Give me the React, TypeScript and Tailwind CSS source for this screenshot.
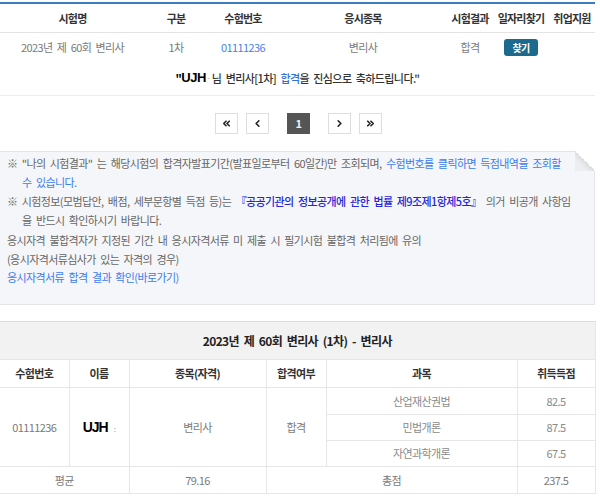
import { ChevronLeft, ChevronRight, ChevronsLeft, ChevronsRight } from 'lucide-react';

const ko = "font-['Noto_Sans_CJK_KR','Noto_Sans',sans-serif]";

function PageButton({ children, active }: { children: React.ReactNode; active?: boolean }) {
  return (
    <div
      className={`flex h-[21px] w-[23px] items-center justify-center border text-[11px] font-bold ${
        active ? 'w-[21px] border-[#555] bg-[#555] text-[#e8f4ff]' : 'border-[#dedede] bg-white text-[#222]'
      }`}
    >
      {children}
    </div>
  );
}

function SubjectRow({ name, score }: { name: string; score: string }) {
  return (
    <>
      <td className="border-b border-l border-[#e6e6e6] text-center text-[#8a8a8a]">{name}</td>
      <td className="border-b border-l border-r border-[#e6e6e6] text-center text-[#8a8a8a]">{score}</td>
    </>
  );
}

export default function App() {
  return (
    <div className={`h-[502px] w-[600px] overflow-hidden bg-white ${ko} text-[11px] tracking-[-0.6px] [word-spacing:2.5px]`}>
      <div className="w-[595px]">
        {/* exam result summary */}
        <div className="mt-[2px] border-t-2 border-[#3d7cc4]">
          <div className="grid h-[29px] grid-cols-[145px_62px_72px_168px_46px_56px_46px] items-center border-b border-[#e3e3e3] text-center font-bold text-[#333] tracking-[-0.8px]">
            <span>시험명</span>
            <span>구분</span>
            <span>수험번호</span>
            <span>응시종목</span>
            <span className="whitespace-nowrap">시험결과</span>
            <span className="whitespace-nowrap">일자리찾기</span>
            <span className="whitespace-nowrap">취업지원</span>
          </div>
          <div className="grid h-[28px] grid-cols-[145px_62px_72px_168px_46px_56px_46px] items-center text-center text-[#7a7a7a]">
            <span>2023년 제 60회 변리사</span>
            <span>1차</span>
            <span className="text-[#4a82e6]">01111236</span>
            <span>변리사</span>
            <span>합격</span>
            <span className="flex justify-center">
              <span className="flex h-[17px] w-[34px] items-center justify-center rounded-[3px] bg-[#1c6a8f] text-[10px] font-bold text-white">
                찾기
              </span>
            </span>
            <span />
          </div>
        </div>

        <div className="flex h-[34px] items-center justify-center text-[#333]">
          <span className="font-bold text-black">"</span>
          <span className="font-['Liberation_Sans',sans-serif] text-[13px] font-bold tracking-[-0.5px] text-black">UJH</span>
          <span className="mx-[1px] text-[8px] text-[#999]">·</span>
          <span className="whitespace-pre font-medium">님 변리사[1차] </span>
          <span className="font-medium text-[#2f6fdc]">합격</span>
          <span className="font-medium">을 진심으로 축하드립니다."</span>
        </div>

        <div className="border-t border-[#ececec]" />

        {/* pagination */}
        <div className="mt-[17px] flex items-center justify-center pl-[2px]">
          <PageButton>
            <ChevronsLeft size={11} strokeWidth={3.5} />
          </PageButton>
          <div className="ml-[8px]">
            <PageButton>
              <ChevronLeft size={11} strokeWidth={3.5} />
            </PageButton>
          </div>
          <div className="ml-[18px]">
            <PageButton active>1</PageButton>
          </div>
          <div className="ml-[18px]">
            <PageButton>
              <ChevronRight size={11} strokeWidth={3.5} />
            </PageButton>
          </div>
          <div className="ml-[8px]">
            <PageButton>
              <ChevronsRight size={11} strokeWidth={3.5} />
            </PageButton>
          </div>
        </div>

        {/* notice box */}
        <div className="relative mt-[17px] h-[154px] border-y border-r border-[#e2e4e8] bg-[#f5f6f9] pl-[7px] pt-[2px] leading-[18.5px] text-[#666]">
          <div className="absolute -right-px -top-px h-[20px] w-[20px] bg-[linear-gradient(225deg,#ffffff_50%,#dcdde0_50%,#eceef1_72%)]" />
          <div>
            <div className="whitespace-nowrap">
              ※ "나의 시험결과" 는 해당시험의 합격자발표기간(발표일로부터 60일간)만 조회되며,{' '}
              <span className="text-[#3b7cf0]">수험번호를 클릭하면 득점내역을 조회할</span>
            </div>
            <div className="pl-[15px] text-[#3b7cf0]">수 있습니다.</div>
          </div>
          <div className="mt-[1px]">
            <div className="whitespace-nowrap">
              ※ 시험정보(모범답안, 배점, 세부문항별 득점 등)는{' '}
              <span className="font-medium text-[#2626d6]">『공공기관의 정보공개에 관한 법률 제9조제1항제5호』</span> 의거 비공개 사항임
            </div>
            <div className="pl-[15px]">을 반드시 확인하시기 바랍니다.</div>
          </div>
          <div className="mt-[2px]">
            <div className="whitespace-nowrap">응시자격 불합격자가 지정된 기간 내 응시자격서류 미 제출 시 필기시험 불합격 처리됨에 유의</div>
            <div>(응시자격서류심사가 있는 자격의 경우)</div>
          </div>
          <div className="text-[#3b7cf0]">응시자격서류 합격 결과 확인(바로가기)</div>
        </div>

        {/* score table */}
        <table className="mt-[16px] w-[595px] table-fixed border-collapse">
          <colgroup>
            <col className="w-[69px]" />
            <col className="w-[60px]" />
            <col className="w-[137px]" />
            <col className="w-[60px]" />
            <col className="w-[191px]" />
            <col className="w-[78px]" />
          </colgroup>
          <tbody>
            <tr className="h-[38px] border-t border-[#dcdcdc] bg-[#f2f2f2]">
              <td colSpan={6} className="border-b border-r border-[#e6e6e6] text-center text-[12px] font-bold text-[#222]">
                2023년 제 60회 변리사 (1차) - 변리사
              </td>
            </tr>
            <tr className="h-[28px] font-bold text-[#333]">
              <td className="border-b border-[#e6e6e6] text-center">수험번호</td>
              <td className="border-b border-l border-[#e6e6e6] text-center">이름</td>
              <td className="border-b border-l border-[#e6e6e6] text-center">종목(자격)</td>
              <td className="border-b border-l border-[#e6e6e6] text-center">합격여부</td>
              <td className="border-b border-l border-[#e6e6e6] text-center">과목</td>
              <td className="border-b border-l border-r border-[#e6e6e6] text-center">취득득점</td>
            </tr>
            <tr className="h-[27px]">
              <td rowSpan={3} className="border-b border-[#e6e6e6] text-center text-[#7a7a7a]">
                01111236
              </td>
              <td rowSpan={3} className="border-b border-l border-[#e6e6e6] text-center">
                <span className="font-['Liberation_Sans',sans-serif] text-[14px] font-bold tracking-[-1px] text-black">UJH</span>
                <span className="ml-[6px] text-[8px] text-[#999]">:</span>
              </td>
              <td rowSpan={3} className="border-b border-l border-[#e6e6e6] text-center text-[#7a7a7a]">
                변리사
              </td>
              <td rowSpan={3} className="border-b border-l border-[#e6e6e6] text-center text-[#7a7a7a]">
                합격
              </td>
              <SubjectRow name="산업재산권법" score="82.5" />
            </tr>
            <tr className="h-[26px]">
              <SubjectRow name="민법개론" score="87.5" />
            </tr>
            <tr className="h-[26px]">
              <SubjectRow name="자연과학개론" score="67.5" />
            </tr>
            <tr className="h-[27px] text-[#7a7a7a]">
              <td colSpan={2} className="border-b border-[#e6e6e6] text-center">평균</td>
              <td className="border-b border-l border-[#e6e6e6] text-center">79.16</td>
              <td colSpan={2} className="border-b border-l border-[#e6e6e6] text-center">총점</td>
              <td className="border-b border-l border-r border-[#e6e6e6] text-center">237.5</td>
            </tr>
          </tbody>
        </table>
      </div>
    </div>
  );
}
